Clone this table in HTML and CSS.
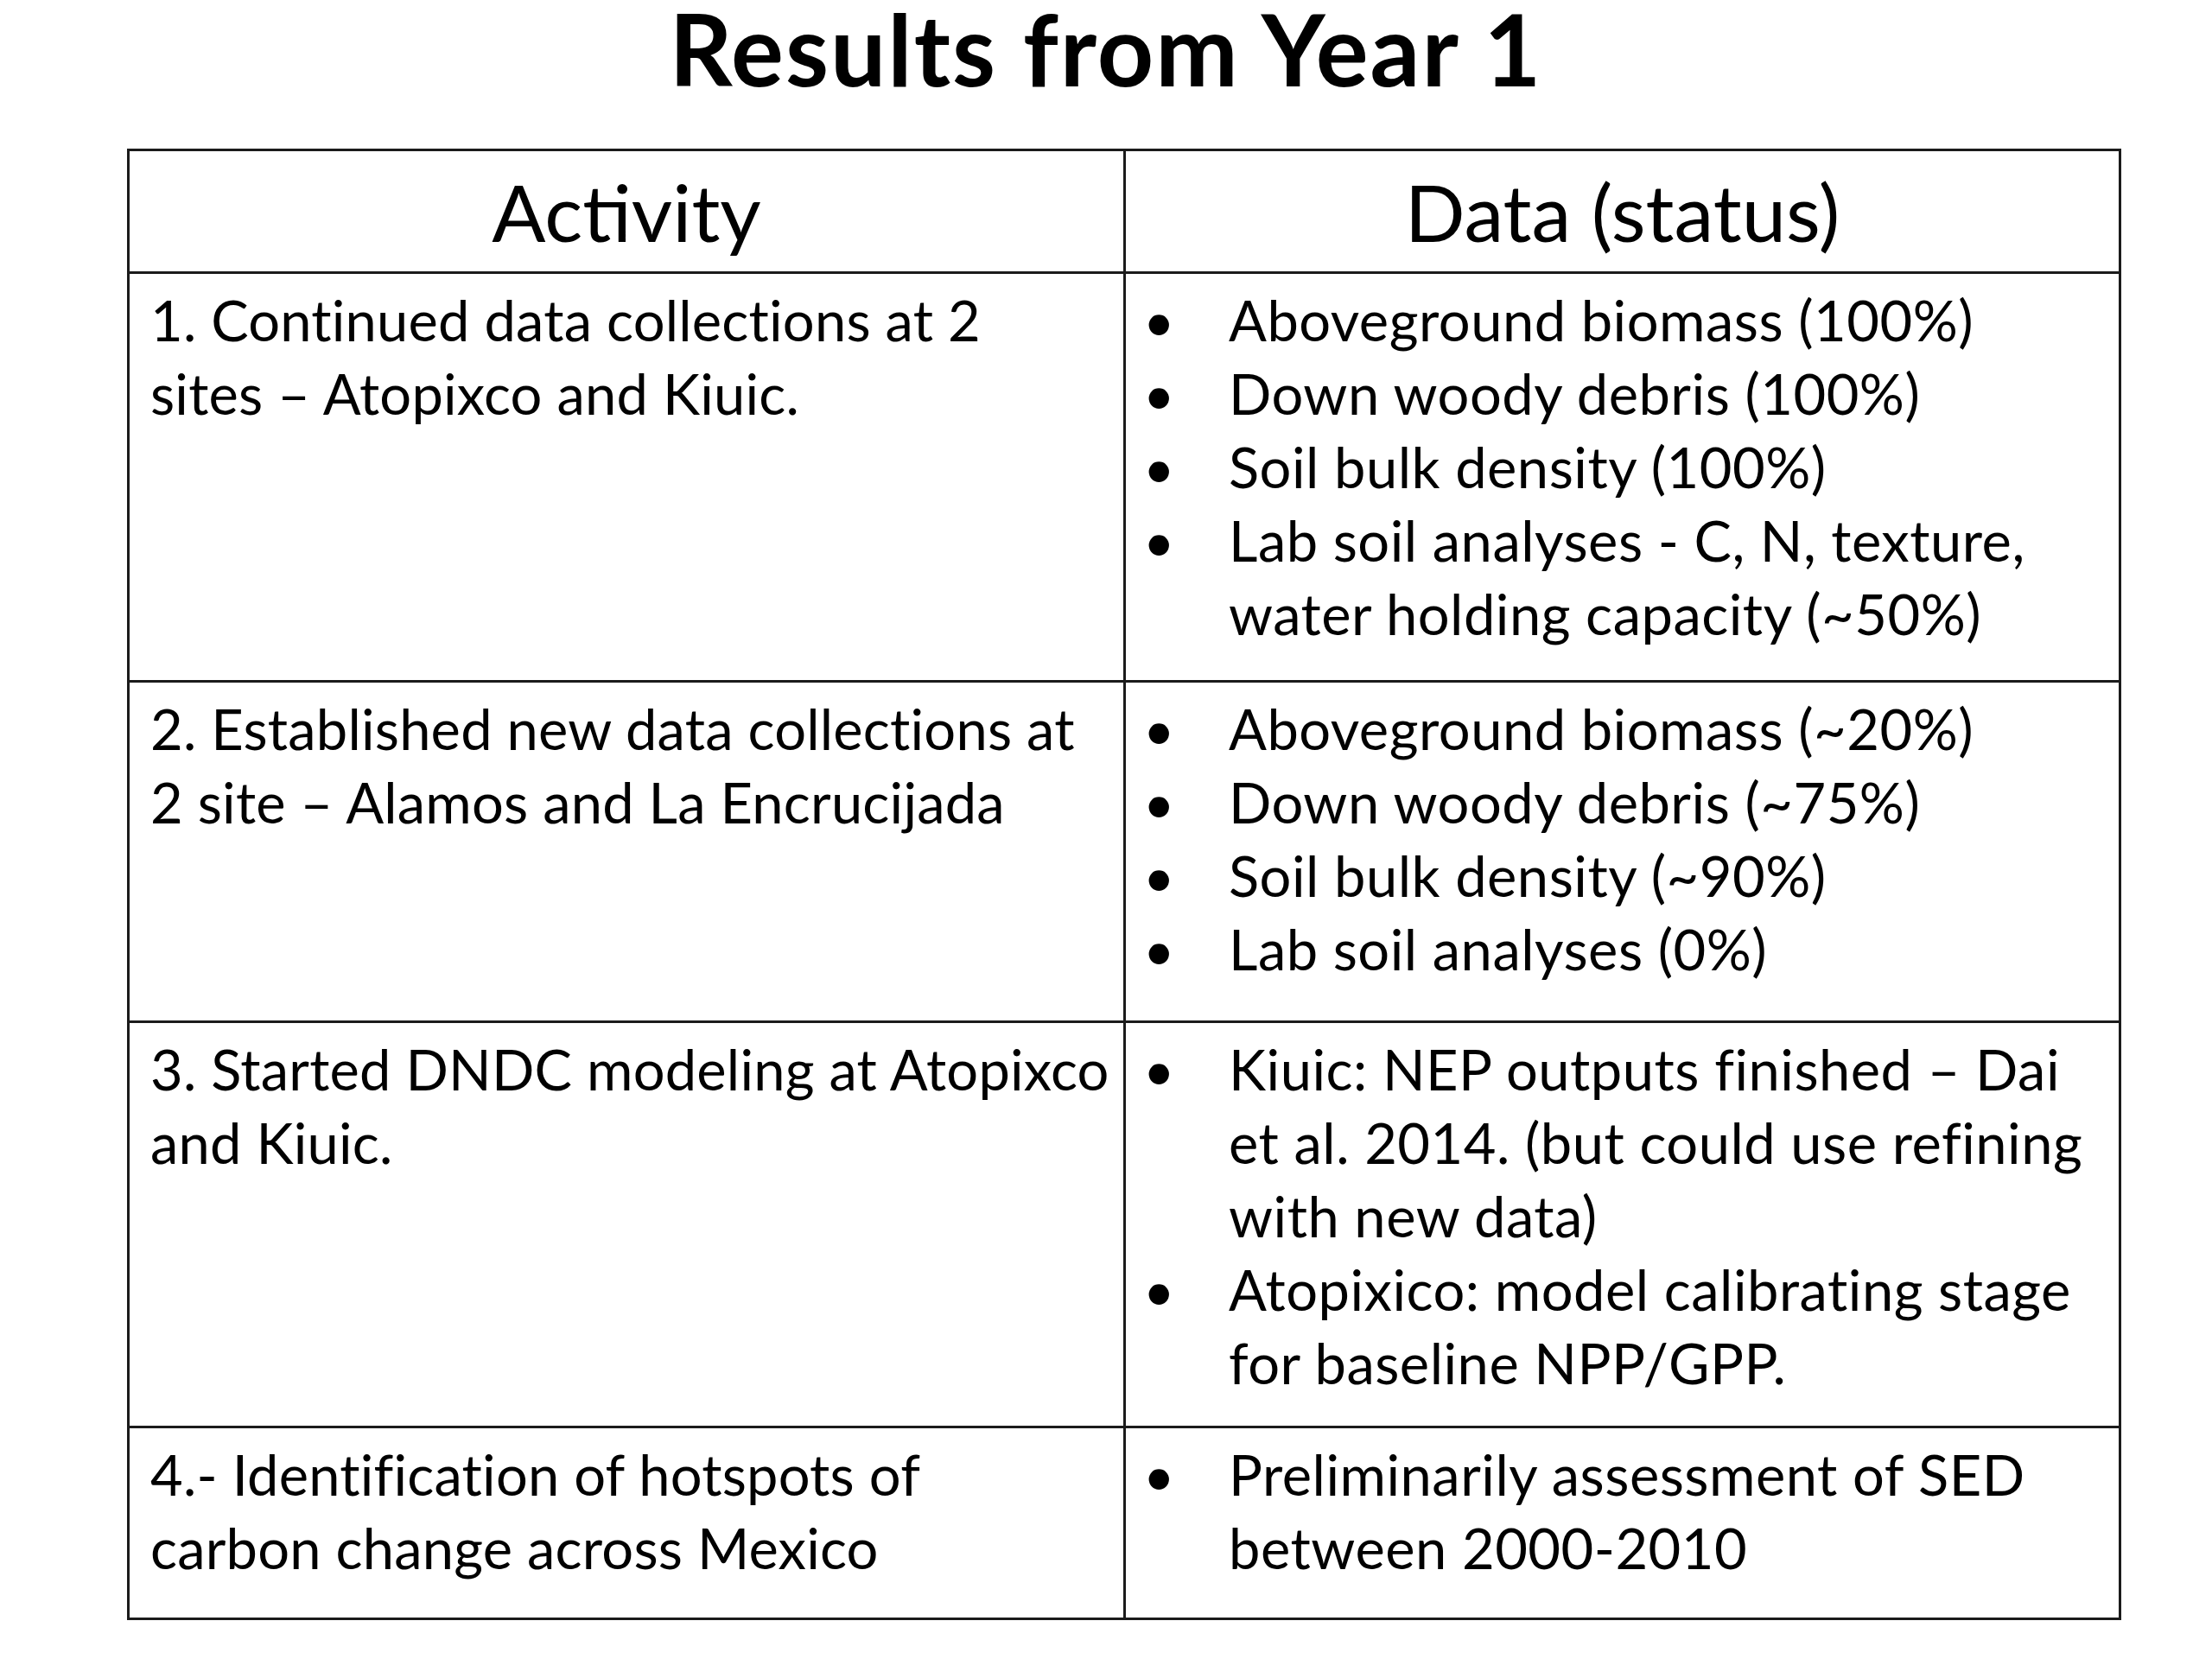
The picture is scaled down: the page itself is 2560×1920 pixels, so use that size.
FILE: index.html
```html
<!DOCTYPE html>
<html lang="en">
<head>
<meta charset="utf-8">
<title>Results from Year 1</title>
<link rel="stylesheet" href="styles.css">
</head>
<body>
<main class="slide">
  <h1 class="title">Results from Year 1</h1>
  <table class="results">
    <colgroup><col class="col-activity"><col class="col-data"></colgroup>
    <thead>
      <tr class="head-row"><th>Activity</th><th>Data (status)</th></tr>
    </thead>
    <tbody>
      <tr class="row row-1">
        <td class="activity">1. Continued data collections at 2<br>sites – Atopixco and Kiuic.</td>
        <td class="data">
          <ul class="bullets">
            <li><span class="dot">•</span><span class="txt">Aboveground biomass (100%)</span></li>
            <li><span class="dot">•</span><span class="txt">Down woody debris (100%)</span></li>
            <li><span class="dot">•</span><span class="txt">Soil bulk density (100%)</span></li>
            <li><span class="dot">•</span><span class="txt">Lab soil analyses - C, N, texture,<br>water holding capacity (~50%)</span></li>
          </ul>
        </td>
      </tr>
      <tr class="row row-2">
        <td class="activity">2. Established new data collections at<br>2 site – Alamos and La Encrucijada</td>
        <td class="data">
          <ul class="bullets">
            <li><span class="dot">•</span><span class="txt">Aboveground biomass (~20%)</span></li>
            <li><span class="dot">•</span><span class="txt">Down woody debris (~75%)</span></li>
            <li><span class="dot">•</span><span class="txt">Soil bulk density (~90%)</span></li>
            <li><span class="dot">•</span><span class="txt">Lab soil analyses (0%)</span></li>
          </ul>
        </td>
      </tr>
      <tr class="row row-3">
        <td class="activity">3. Started DNDC modeling at Atopixco<br>and Kiuic.</td>
        <td class="data">
          <ul class="bullets">
            <li><span class="dot">•</span><span class="txt">Kiuic: NEP outputs finished – Dai<br>et al. 2014. (but could use refining<br>with new data)</span></li>
            <li><span class="dot">•</span><span class="txt">Atopixico: model calibrating stage<br>for baseline NPP/GPP.</span></li>
          </ul>
        </td>
      </tr>
      <tr class="row row-4">
        <td class="activity">4.- Identification of hotspots of<br>carbon change across Mexico</td>
        <td class="data">
          <ul class="bullets">
            <li><span class="dot">•</span><span class="txt">Preliminarily assessment of SED<br>between 2000-2010</span></li>
          </ul>
        </td>
      </tr>
    </tbody>
  </table>
</main>
</body>
</html>
```

FILE: styles.css
```css
html, body {
  margin: 0;
  padding: 0;
  background: #ffffff;
}

body {
  font-family: Lato, "Open Sans", "Liberation Sans", sans-serif;
  color: #000;
}

.slide {
  width: 2560px;
  height: 1920px;
  padding: 0;
  box-sizing: border-box;
  overflow: hidden;
}

.title {
  margin: 0 0 60px 0;
  font-size: 114px;
  line-height: 112px;
  font-weight: 700;
  text-align: center;
  letter-spacing: 2px;
  white-space: nowrap;
}

.results {
  margin-left: 147px;
  width: 2305px;
  border-collapse: collapse;
  table-layout: fixed;
}

.col-activity { width: 1153px; }
.col-data { width: 1152px; }

.results th,
.results td {
  border: 3px solid #1b1b1b;
  vertical-align: top;
  white-space: nowrap;
}

.head-row th {
  height: 139px;
  padding: 0;
  font-size: 92px;
  font-weight: 400;
  text-align: center;
  vertical-align: middle;
  line-height: 1;
}

.results td {
  font-size: 65px;
  line-height: 85px;
  padding: 11px 0 0 0;
}

.activity {
  letter-spacing: 0.2px;
  padding-left: 24px !important;
}

.data {
  letter-spacing: 0.5px;
}

.bullets {
  list-style: none;
  margin: 0;
  padding: 0 0 0 20px;
}

.bullets li {
  display: grid;
  grid-template-columns: 99px 1fr;
}

.dot {
  font-size: 63px;
}

.row-1 td { height: 459px; }
.row-2 td { height: 380px; }
.row-3 td { height: 455px; }
.row-4 td { height: 208px; }
```
